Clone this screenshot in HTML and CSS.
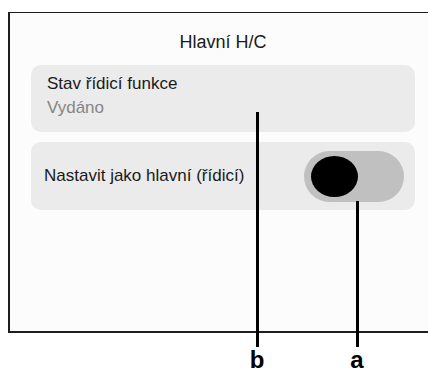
FILE: index.html
```html
<!DOCTYPE html>
<html lang="cs">
<head>
    <meta charset="UTF-8">
    <meta name="viewport" content="width=device-width, initial-scale=1.0">
    <title>Hlavní H/C</title>
    <link rel="stylesheet" href="styles.css">
</head>
<body>
    <div class="page">
        <div class="screen">
            <h1 class="screen-title">Hlavní H/C</h1>

            <div class="card card-status">
                <div class="card-label">Stav řídicí funkce</div>
                <div class="card-value">Vydáno</div>
            </div>

            <div class="card card-switch">
                <div class="card-label">Nastavit jako hlavní (řídicí)</div>
                <div class="toggle">
                    <div class="toggle-knob"></div>
                </div>
            </div>
        </div>

        <!-- callout lines -->
        <div class="callout callout-b"></div>
        <div class="callout callout-a"></div>
        <div class="callout-label label-b">b</div>
        <div class="callout-label label-a">a</div>
    </div>
</body>
</html>
```

FILE: styles.css
```css
html, body {
    margin: 0;
    padding: 0;
    overflow: hidden;
    background-color: #fff;
}

body {
    font-family: "Liberation Sans", Arial, sans-serif;
    color: #1a1a1a;
}

.page {
    position: relative;
    box-sizing: border-box;
    width: 428px;
    height: 372px;
    padding: 12px 0 0 8px;
    overflow: hidden;
}

.screen {
    box-sizing: border-box;
    width: 440px;
    height: 321px;
    padding: 18px 0 0 21px;
    background-color: #fcfcfc;
    border: 1px solid #1e1e1e;
    border-left-width: 2px;
    border-bottom-width: 2px;
    border-right: none;
}

.screen-title {
    margin: 0 0 12px 0;
    width: 384px;
    font-size: 18px;
    font-weight: normal;
    line-height: 22px;
    text-align: center;
    color: #1a1a1a;
}

.card {
    width: 384px;
    box-sizing: border-box;
    background-color: #ebebeb;
    border-radius: 10px;
}

.card-status {
    height: 67px;
    padding: 9px 16px 0 16px;
}

.card-label {
    font-size: 17px;
    line-height: 20px;
}

.card-value {
    margin-top: 4px;
    font-size: 17px;
    line-height: 20px;
    color: #858585;
}

.card-switch {
    margin-top: 10px;
    height: 68px;
    padding: 0 11px 0 13px;
    display: flex;
    align-items: center;
    justify-content: space-between;
}

.toggle {
    width: 100px;
    height: 51px;
    border-radius: 26px;
    background-color: #c0c0c0;
    display: flex;
    align-items: center;
}

.toggle-knob {
    width: 47px;
    height: 41px;
    margin-left: 7px;
    border-radius: 50%;
    background-color: #000;
}

.callout {
    position: absolute;
    width: 3px;
    background-color: #000;
}

.callout-b {
    left: 256px;
    top: 112px;
    height: 235px;
}

.callout-a {
    left: 356px;
    top: 201px;
    height: 146px;
}

.callout-label {
    position: absolute;
    top: 348px;
    width: 30px;
    font-size: 24px;
    font-weight: bold;
    line-height: 24px;
    text-align: center;
    color: #000;
}

.label-b {
    left: 242px;
}

.label-a {
    left: 342px;
}
```
